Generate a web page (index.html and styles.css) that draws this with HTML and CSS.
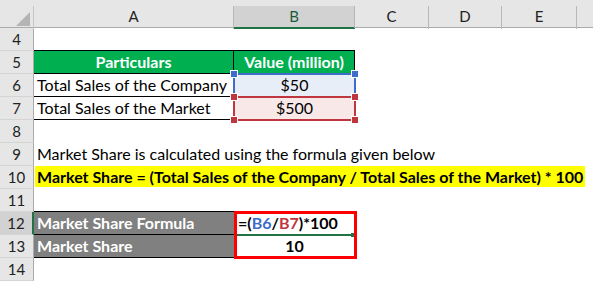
FILE: index.html
```html
<!DOCTYPE html>
<html>
<head>
<meta charset="utf-8">
<link rel="stylesheet" href="styles.css">
</head>
<body>
<div class="sheet">
  <div class="row head">
    <div class="corner"><span class="tri"></span></div>
    <div class="ch">A</div>
    <div class="ch sel">B</div>
    <div class="ch">C</div>
    <div class="ch">D</div>
    <div class="ch">E</div>
    <div class="ch last"></div>
  </div>
  <div class="row">
    <div class="rh">4</div>
    <div class="c bb"></div><div class="c bb"></div><div class="c"></div><div class="c"></div><div class="c"></div><div class="c"></div>
  </div>
  <div class="row">
    <div class="rh">5</div>
    <div class="c green bb br center">Particulars</div><div class="c green bb br center">Value (million)</div><div class="c"></div><div class="c"></div><div class="c"></div><div class="c"></div>
  </div>
  <div class="row">
    <div class="rh">6</div>
    <div class="c bb br">Total Sales of the Company</div><div class="c bb center blue-fill">$50</div><div class="c"></div><div class="c"></div><div class="c"></div><div class="c"></div>
  </div>
  <div class="row">
    <div class="rh">7</div>
    <div class="c bb br">Total Sales of the Market</div><div class="c bb center red-fill">$500</div><div class="c"></div><div class="c"></div><div class="c"></div><div class="c"></div>
  </div>
  <div class="row">
    <div class="rh">8</div>
    <div class="c"></div><div class="c"></div><div class="c"></div><div class="c"></div><div class="c"></div><div class="c"></div>
  </div>
  <div class="row">
    <div class="rh">9</div>
    <div class="c">Market Share is calculated using the formula given below</div><div class="c"></div><div class="c"></div><div class="c"></div><div class="c"></div><div class="c"></div>
  </div>
  <div class="row">
    <div class="rh">10</div>
    <div class="c"><span class="hl">Market Share = (Total Sales of the Company / Total Sales of the Market) * 100</span></div><div class="c"></div><div class="c"></div><div class="c"></div><div class="c"></div><div class="c"></div>
  </div>
  <div class="row">
    <div class="rh">11</div>
    <div class="c bb"></div><div class="c"></div><div class="c"></div><div class="c"></div><div class="c"></div><div class="c"></div>
  </div>
  <div class="row">
    <div class="rh rsel">12</div>
    <div class="c grey bb">Market Share Formula</div><div class="c formula"><span>=(</span><span class="rb">B6</span><span>/</span><span class="rr">B7</span><span>)*100</span></div><div class="c"></div><div class="c"></div><div class="c"></div><div class="c"></div>
  </div>
  <div class="row">
    <div class="rh">13</div>
    <div class="c grey bb">Market Share</div><div class="c center bold">10</div><div class="c"></div><div class="c"></div><div class="c"></div><div class="c"></div>
  </div>
  <div class="row">
    <div class="rh">14</div>
    <div class="c"></div><div class="c"></div><div class="c"></div><div class="c"></div><div class="c"></div><div class="c"></div>
  </div>

  <div class="range blue-range">
    <span class="hd tl"></span><span class="hd tr"></span>
  </div>
  <div class="range red-range">
    <span class="hd tl"></span><span class="hd tr"></span><span class="hd bl"></span><span class="hd brr"></span>
  </div>
  <div class="edit-line"><span class="fill-handle"></span></div>
  <div class="red-box"></div>
</div>
</body>
</html>
```

FILE: styles.css
```css
html, body {
  margin: 0;
  padding: 0;
  background: #ffffff;
  overflow: hidden;
}

.sheet {
  position: relative;
  width: 593px;
  height: 281px;
  font-family: Lato, "Liberation Sans", sans-serif;
  color: #000;
}

.row {
  display: grid;
  grid-template-columns: 34px 200px 121px 74px 73px 75px 16px;
  height: 23px;
}

.row.head {
  height: 28px;
  background: #e6e6e6;
  border-bottom: 1px solid #ababab;
  box-sizing: border-box;
}

.corner {
  position: relative;
  border-right: 1px solid #c6c6c6;
  margin-top: 6px;
}

.tri {
  position: absolute;
  right: 3px;
  bottom: 3px;
  width: 0;
  height: 0;
  border-left: 14px solid transparent;
  border-bottom: 14px solid #b4b4b4;
}

.ch {
  margin-top: 6px;
  border-right: 1px solid #b8b8b8;
  font-size: 15px;
  line-height: 21px;
  text-align: center;
  color: #222;
}

.ch.sel {
  background: #d2d2d2;
  border-bottom: 2px solid #217346;
  color: #1d5a3a;
}

.ch.last {
  border-right: none;
}

.rh {
  background: #e6e6e6;
  border-right: 1px solid #ababab;
  border-bottom: 1px solid #d4d4d4;
  box-sizing: border-box;
  font-size: 15px;
  line-height: 22px;
  text-align: center;
  color: #222;
}

.rh.rsel {
  background: #d2d2d2;
  border-right: 2px solid #217346;
}

.c {
  box-sizing: border-box;
  font-size: 16px;
  line-height: 22px;
  padding: 0 3px;
  white-space: nowrap;
  min-width: 0;
}

.bb { border-bottom: 1px solid #000; }
.br { border-right: 1px solid #000; }
.center { text-align: center; }
.bold { font-weight: bold; }

.green {
  background: #00b050;
  color: #fff;
  font-weight: bold;
}

.grey {
  background: #808080;
  color: #fff;
  font-weight: bold;
}

.blue-fill { background: #e8eef8; }
.red-fill { background: #f9e8e8; }

.hl {
  display: inline-block;
  background: #ffff00;
  font-weight: bold;
  line-height: 21px;
  margin-left: -2px;
  padding: 0 2px;
}

.formula {
  font-weight: bold;
  padding-left: 4px;
}

.rb { color: #3d6dc8; }
.rr { color: #c0363e; }

.range {
  position: absolute;
  box-sizing: border-box;
  left: 233px;
  width: 123px;
}

.blue-range {
  top: 73px;
  height: 25px;
  border: 2px solid #3d6dc8;
}

.red-range {
  top: 96px;
  height: 25px;
  border: 2px solid #c0363e;
}

.hd {
  position: absolute;
  width: 6px;
  height: 6px;
  border: 1px solid #fff;
}

.blue-range .hd { background: #3d6dc8; }
.red-range .hd { background: #c0363e; }

.hd.tl { left: -5px; top: -5px; }
.hd.tr { right: -5px; top: -5px; }
.hd.bl { left: -5px; bottom: -5px; }
.hd.brr { right: -5px; bottom: -5px; }

.edit-line {
  position: absolute;
  left: 237px;
  top: 234px;
  width: 115px;
  height: 2px;
  background: #217346;
}

.fill-handle {
  position: absolute;
  right: -3px;
  top: -1px;
  width: 4px;
  height: 4px;
  background: #217346;
}

.red-box {
  position: absolute;
  box-sizing: border-box;
  left: 234px;
  top: 211px;
  width: 123px;
  height: 48px;
  border: 3px solid #ff0000;
}
```
